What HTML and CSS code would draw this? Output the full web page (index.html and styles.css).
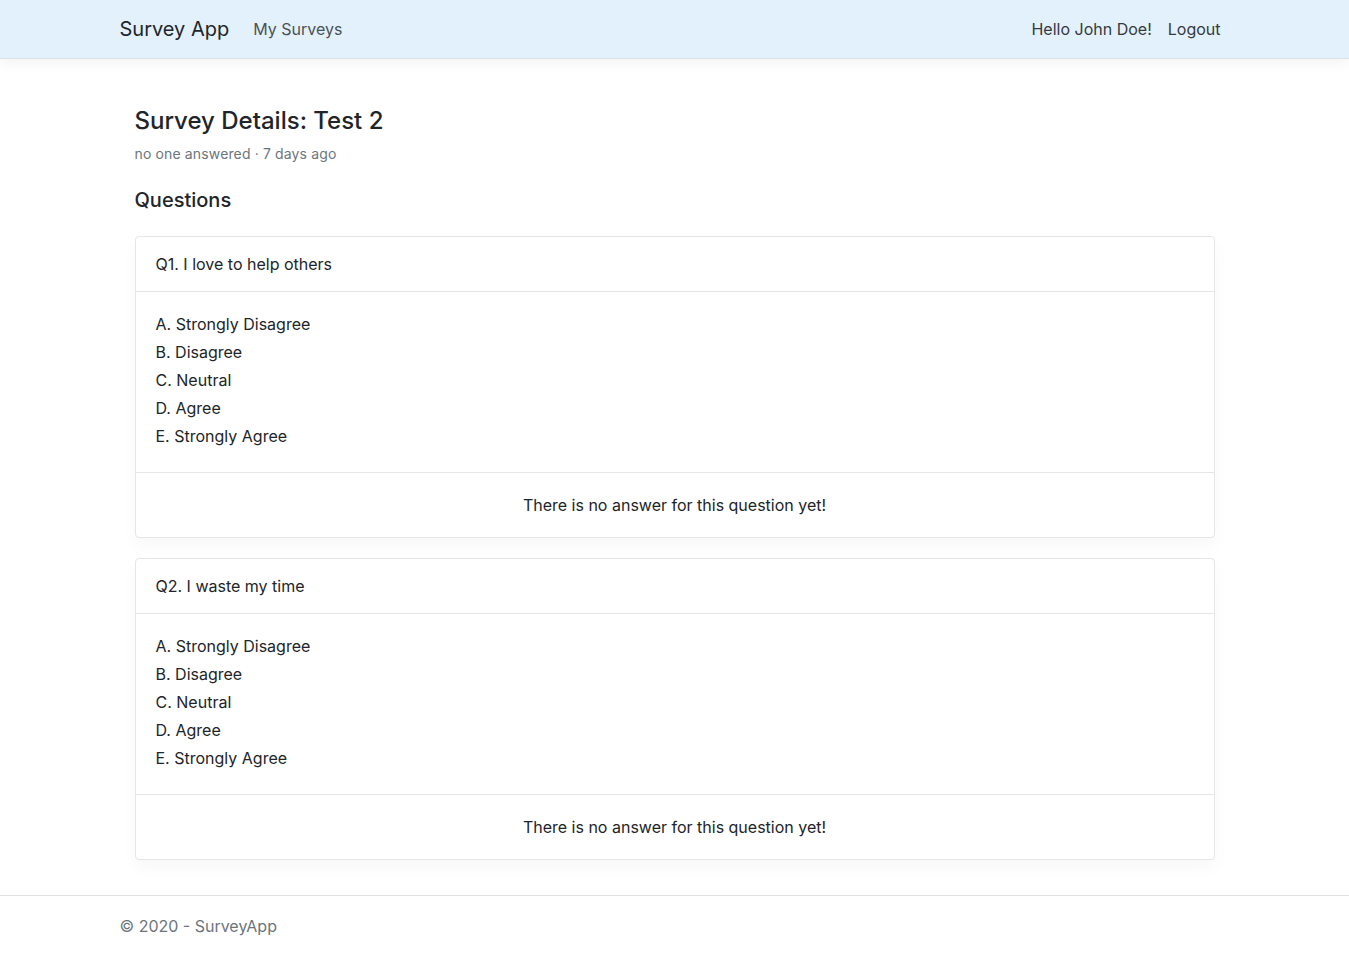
FILE: index.html
```html
<!DOCTYPE html>
<html lang="en">
<head>
<meta charset="utf-8">
<title>Survey Details - SurveyApp</title>
<link rel="stylesheet" href="styles.css">
</head>
<body>
<header class="navbar">
  <div class="container nav-inner">
    <a class="brand" href="#">Survey App</a>
    <nav class="nav-left">
      <a class="nav-link muted" href="#">My Surveys</a>
    </nav>
    <nav class="nav-right">
      <span class="nav-link">Hello John Doe!</span>
      <a class="nav-link" href="#">Logout</a>
    </nav>
  </div>
</header>

<main class="container main">
  <div class="inner">
    <h3 class="title">Survey Details: Test 2</h3>
    <div class="subtitle">no one answered · 7 days ago</div>
    <h5 class="section">Questions</h5>

    <div class="card">
      <div class="card-header">Q1. I love to help others</div>
      <div class="card-body">
        <ul class="options">
          <li>A. Strongly Disagree</li>
          <li>B. Disagree</li>
          <li>C. Neutral</li>
          <li>D. Agree</li>
          <li>E. Strongly Agree</li>
        </ul>
      </div>
      <div class="card-footer">There is no answer for this question yet!</div>
    </div>

    <div class="card">
      <div class="card-header">Q2. I waste my time</div>
      <div class="card-body">
        <ul class="options">
          <li>A. Strongly Disagree</li>
          <li>B. Disagree</li>
          <li>C. Neutral</li>
          <li>D. Agree</li>
          <li>E. Strongly Agree</li>
        </ul>
      </div>
      <div class="card-footer">There is no answer for this question yet!</div>
    </div>
  </div>
</main>

<footer class="footer">
  <div class="container">© 2020 - SurveyApp</div>
</footer>
</body>
</html>
```

FILE: styles.css
```css
* { box-sizing: border-box; }

html, body {
  margin: 0;
  padding: 0;
}

body {
  font-family: "Inter", "Noto Sans", "Liberation Sans", sans-serif;
  font-size: 16px;
  line-height: 1.5;
  color: #212529;
  background: #fff;
}

a { text-decoration: none; }

.container {
  width: 100%;
  max-width: 1140px;
  margin: 0 auto;
  padding: 0 15px;
}

.navbar {
  background: #e3f1fd;
  border-bottom: 1px solid #dee2e6;
  box-shadow: 0 4px 12px rgba(0, 0, 0, 0.05);
  height: 59px;
}

.nav-inner {
  display: flex;
  align-items: center;
  height: 58px;
}

.brand {
  font-size: 20px;
  color: #212529;
  margin-right: 16px;
  line-height: 30px;
}

.nav-left {
  display: flex;
  flex: 1;
}

.nav-right {
  display: flex;
  margin-right: 1px;
}

.nav-link {
  padding: 8px;
  color: #343a40;
  font-size: 16px;
}

.nav-link.muted {
  color: #4b5157;
}

.main {
  padding-top: 48px;
  padding-bottom: 15px;
}

.inner {
  padding: 0 15px;
}

.title {
  font-size: 24px;
  font-weight: 500;
  line-height: 1.2;
  margin: 0 0 7px;
}

.subtitle {
  font-size: 14px;
  line-height: 21px;
  color: #6c757d;
  letter-spacing: 0.14px;
}

.section {
  font-size: 20px;
  font-weight: 500;
  line-height: 24px;
  margin: 24px 0 24px;
}

.card {
  border: 1px solid #e6e6e6;
  border-radius: 4px;
  background: #fff;
  box-shadow: 0 8px 16px rgba(0, 0, 0, 0.03);
  margin-bottom: 20px;
}

.card-header {
  padding: 15px 20px;
  border-bottom: 1px solid #e6e6e6;
}

.card-body {
  padding: 18px 20px 22px;
}

.options {
  list-style: none;
  margin: 0;
  padding: 0;
}

.options li {
  line-height: 28px;
}

.card-footer {
  padding: 20px;
  border-top: 1px solid #e6e6e6;
  text-align: center;
}

.footer {
  border-top: 1px solid #dee2e6;
  line-height: 60px;
  color: #6c757d;
  white-space: nowrap;
}
```
